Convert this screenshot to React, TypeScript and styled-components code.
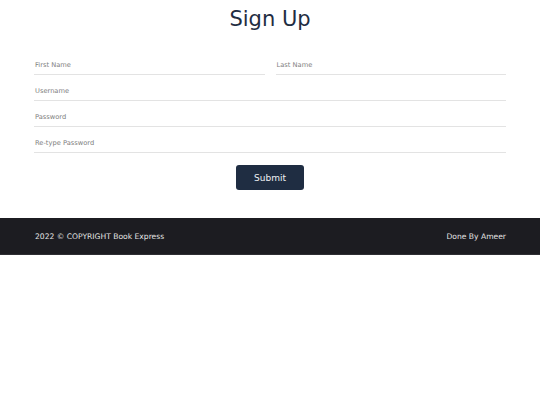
import React from "react";
import styled, { createGlobalStyle } from "styled-components";

const Global = createGlobalStyle`
  html, body { margin: 0; padding: 0; background: #fff; }
  body { font-family: "DejaVu Sans", sans-serif; }
  * { box-sizing: border-box; }
`;

const Main = styled.main`
  width: 472px;
  margin: 0 auto;
  padding-top: 6px;
  height: 218px;
  display: flex;
  flex-direction: column;
`;

const Title = styled.h1`
  margin: 0;
  font-weight: 400;
  font-size: 21px;
  line-height: 26px;
  color: #1f2d42;
  text-align: center;
`;

const Form = styled.form`
  margin-top: 23px;
  display: flex;
  flex-direction: column;
`;

const Row = styled.div`
  display: flex;
  gap: 11px;
  height: 26px;
`;

const Field = styled.label`
  flex: 1;
  height: 20px;
  border-bottom: 1px solid #e3e3e3;
  display: flex;
  align-items: center;
  padding-left: 1px;
  font-size: 6.7px;
  color: #808080;
`;

const Submit = styled.button`
  align-self: center;
  margin-top: 6px;
  width: 68px;
  height: 25px;
  border: none;
  border-radius: 3px;
  background: #1f2d42;
  color: #eef1f5;
  font-family: "DejaVu Sans", sans-serif;
  font-size: 9px;
`;

const Footer = styled.footer`
  height: 37px;
  background: #1c1c21;
  border-bottom: 1px solid #2e2e33;
  display: flex;
  justify-content: space-between;
  align-items: center;
  padding: 0 34px 0 35px;
  color: #e4e4e4;
  font-size: 7.6px;
`;

export default function App() {
  return (
    <>
      <Global />
      <Main>
        <Title>Sign Up</Title>
        <Form onSubmit={(e) => e.preventDefault()}>
          <Row>
            <Field>First Name</Field>
            <Field>Last Name</Field>
          </Row>
          <Row>
            <Field>Username</Field>
          </Row>
          <Row>
            <Field>Password</Field>
          </Row>
          <Row>
            <Field>Re-type Password</Field>
          </Row>
          <Submit type="submit">Submit</Submit>
        </Form>
      </Main>
      <Footer>
        <span>2022 © COPYRIGHT Book Express</span>
        <span>Done By Ameer</span>
      </Footer>
    </>
  );
}
